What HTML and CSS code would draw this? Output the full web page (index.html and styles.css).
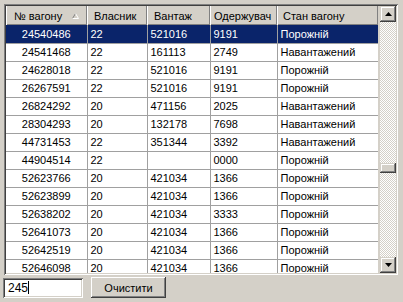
FILE: index.html
```html
<!DOCTYPE html>
<html>
<head>
<meta charset="utf-8">
<link rel="stylesheet" href="styles.css">
</head>
<body>
<div class="grid">
  <div class="view">
    <table class="tbl">
      <colgroup><col class="c1"><col class="c2"><col class="c3"><col class="c4"><col class="c5"></colgroup>
      <thead>
        <tr>
          <th class="h1"><div class="hcell"><span>№ вагону</span><svg class="sort" width="7" height="6" viewBox="0 0 7 6"><path d="M0.5 5.5 L3.5 0.5" stroke="#808080" fill="none"/><path d="M3.5 0.5 L6.5 5.5 M0.5 5.5 L6.5 5.5" stroke="#fff" fill="none"/></svg></div></th>
          <th class="h2">Власник</th>
          <th class="h3">Вантаж</th>
          <th class="h4">Одержувач</th>
          <th class="h5">Стан вагону</th>
        </tr>
      </thead>
      <tbody>
        <tr class="sel"><td class="num">24540486</td><td>22</td><td>521016</td><td>9191</td><td>Порожній</td></tr>
        <tr><td class="num">24541468</td><td>22</td><td>161113</td><td>2749</td><td>Навантажений</td></tr>
        <tr><td class="num">24628018</td><td>22</td><td>521016</td><td>9191</td><td>Порожній</td></tr>
        <tr><td class="num">26267591</td><td>22</td><td>521016</td><td>9191</td><td>Порожній</td></tr>
        <tr><td class="num">26824292</td><td>20</td><td>471156</td><td>2025</td><td>Навантажений</td></tr>
        <tr><td class="num">28304293</td><td>20</td><td>132178</td><td>7698</td><td>Навантажений</td></tr>
        <tr><td class="num">44731453</td><td>22</td><td>351344</td><td>3392</td><td>Навантажений</td></tr>
        <tr><td class="num">44904514</td><td>22</td><td></td><td>0000</td><td>Порожній</td></tr>
        <tr><td class="num">52623766</td><td>20</td><td>421034</td><td>1366</td><td>Порожній</td></tr>
        <tr><td class="num">52623899</td><td>20</td><td>421034</td><td>1366</td><td>Порожній</td></tr>
        <tr><td class="num">52638202</td><td>20</td><td>421034</td><td>3333</td><td>Порожній</td></tr>
        <tr><td class="num">52641073</td><td>20</td><td>421034</td><td>1366</td><td>Порожній</td></tr>
        <tr><td class="num">52642519</td><td>20</td><td>421034</td><td>1366</td><td>Порожній</td></tr>
        <tr><td class="num">52646098</td><td>20</td><td>421034</td><td>1366</td><td>Порожній</td></tr>
      </tbody>
    </table>
  </div>
  <div class="vscroll">
    <div class="sbtn"><svg width="7" height="4" viewBox="0 0 7 4"><path d="M3.5 0 L7 4 L0 4 Z" fill="#000"/></svg></div>
    <div class="track"><div class="thumb"></div></div>
    <div class="sbtn"><svg width="7" height="4" viewBox="0 0 7 4"><path d="M0 0 L7 0 L3.5 4 Z" fill="#000"/></svg></div>
  </div>
</div>
<div class="bar">
  <div class="input"><span>245</span><span class="caret"></span></div>
  <button class="clear">Очистити</button>
</div>
</body>
</html>
```
FILE: styles.css
```css
html, body {
  margin: 0;
  padding: 0;
  background: #d4d0c8;
  font-family: "Liberation Sans", Arial, sans-serif;
  font-size: 11px;
  color: #000;
}

.grid {
  margin: 4px 5px 0 4px;
  height: 271px;
  box-sizing: border-box;
  display: flex;
  box-shadow: inset 1px 1px #808080, inset -1px -1px #fff, inset 2px 2px #404040, inset -2px -2px #d4d0c8;
  padding: 2px;
  background: #d4d0c8;
}

.view {
  flex: 1;
  overflow: hidden;
  background: linear-gradient(#d4d0c8 0 19px, #fff 19px);
}

.tbl {
  table-layout: fixed;
  border-collapse: collapse;
  width: 372px;
}

.c1 { width: 81px; }
.c2 { width: 60px; }
.c3 { width: 63px; }
.c4 { width: 67px; }
.c5 { width: 101px; }

.tbl th {
  height: 19px;
  padding: 0 0 0 6px;
  box-sizing: border-box;
  font-weight: normal;
  text-align: left;
  background: #d4d0c8;
  box-shadow: inset 1px 0 #fff, inset -1px -1px #808080;
  white-space: nowrap;
}

.tbl th.h1 { padding-left: 8px; padding-right: 8px; }
.tbl th.h2, .tbl th.h3 { padding-left: 7px; }
.tbl th.h4 { padding-left: 4px; }

.hcell {
  display: flex;
  align-items: center;
  justify-content: space-between;
}

.sort { display: block; margin-top: 1px; }

.tbl td {
  height: 18px;
  box-sizing: border-box;
  padding: 0 0 0 3px;
  border-right: 1px solid #a0a0a0;
  border-bottom: 1px solid #a0a0a0;
  white-space: nowrap;
  overflow: hidden;
}

.tbl td.num { text-align: center; padding: 0; }

.tbl tr.sel td {
  background: #0a246a;
  color: #fff;
}

.vscroll {
  width: 16px;
  margin-left: 2px;
  display: flex;
  flex-direction: column;
}

.sbtn {
  width: 16px;
  height: 16px;
  flex: none;
  background: #d4d0c8;
  box-shadow: inset -1px -1px #404040, inset 1px 1px #d4d0c8, inset -2px -2px #808080, inset 2px 2px #fff;
  display: flex;
  align-items: center;
  justify-content: center;
}

.sbtn svg { display: block; }

.track {
  flex: 1;
  display: flex;
  flex-direction: column;
  padding-top: 141px;
  background: repeating-conic-gradient(#fff 0 25%, #d4d0c8 0 50%) 0 0 / 2px 2px;
}

.thumb {
  height: 10px;
  background: #d4d0c8;
  box-shadow: inset -1px -1px #404040, inset 1px 1px #d4d0c8, inset -2px -2px #808080, inset 2px 2px #fff;
}

.bar {
  display: flex;
  align-items: center;
  gap: 8px;
  padding: 2px 0 0 3px;
}

.input {
  width: 80px;
  height: 20px;
  box-sizing: border-box;
  background: #fff;
  box-shadow: inset 1px 1px #808080, inset -1px -1px #fff, inset 2px 2px #404040, inset -2px -2px #d4d0c8;
  display: flex;
  align-items: center;
  padding-left: 5px;
  font-size: 12px;
}

.caret {
  width: 1px;
  height: 13px;
  background: #000;
}

.clear {
  width: 75px;
  height: 21px;
  margin: 0;
  padding: 0;
  border: none;
  background: #d4d0c8;
  font-family: "Liberation Sans", Arial, sans-serif;
  font-size: 11px;
  color: #000;
  box-shadow: inset -1px -1px #404040, inset 1px 1px #fff, inset -2px -2px #808080;
}
```
